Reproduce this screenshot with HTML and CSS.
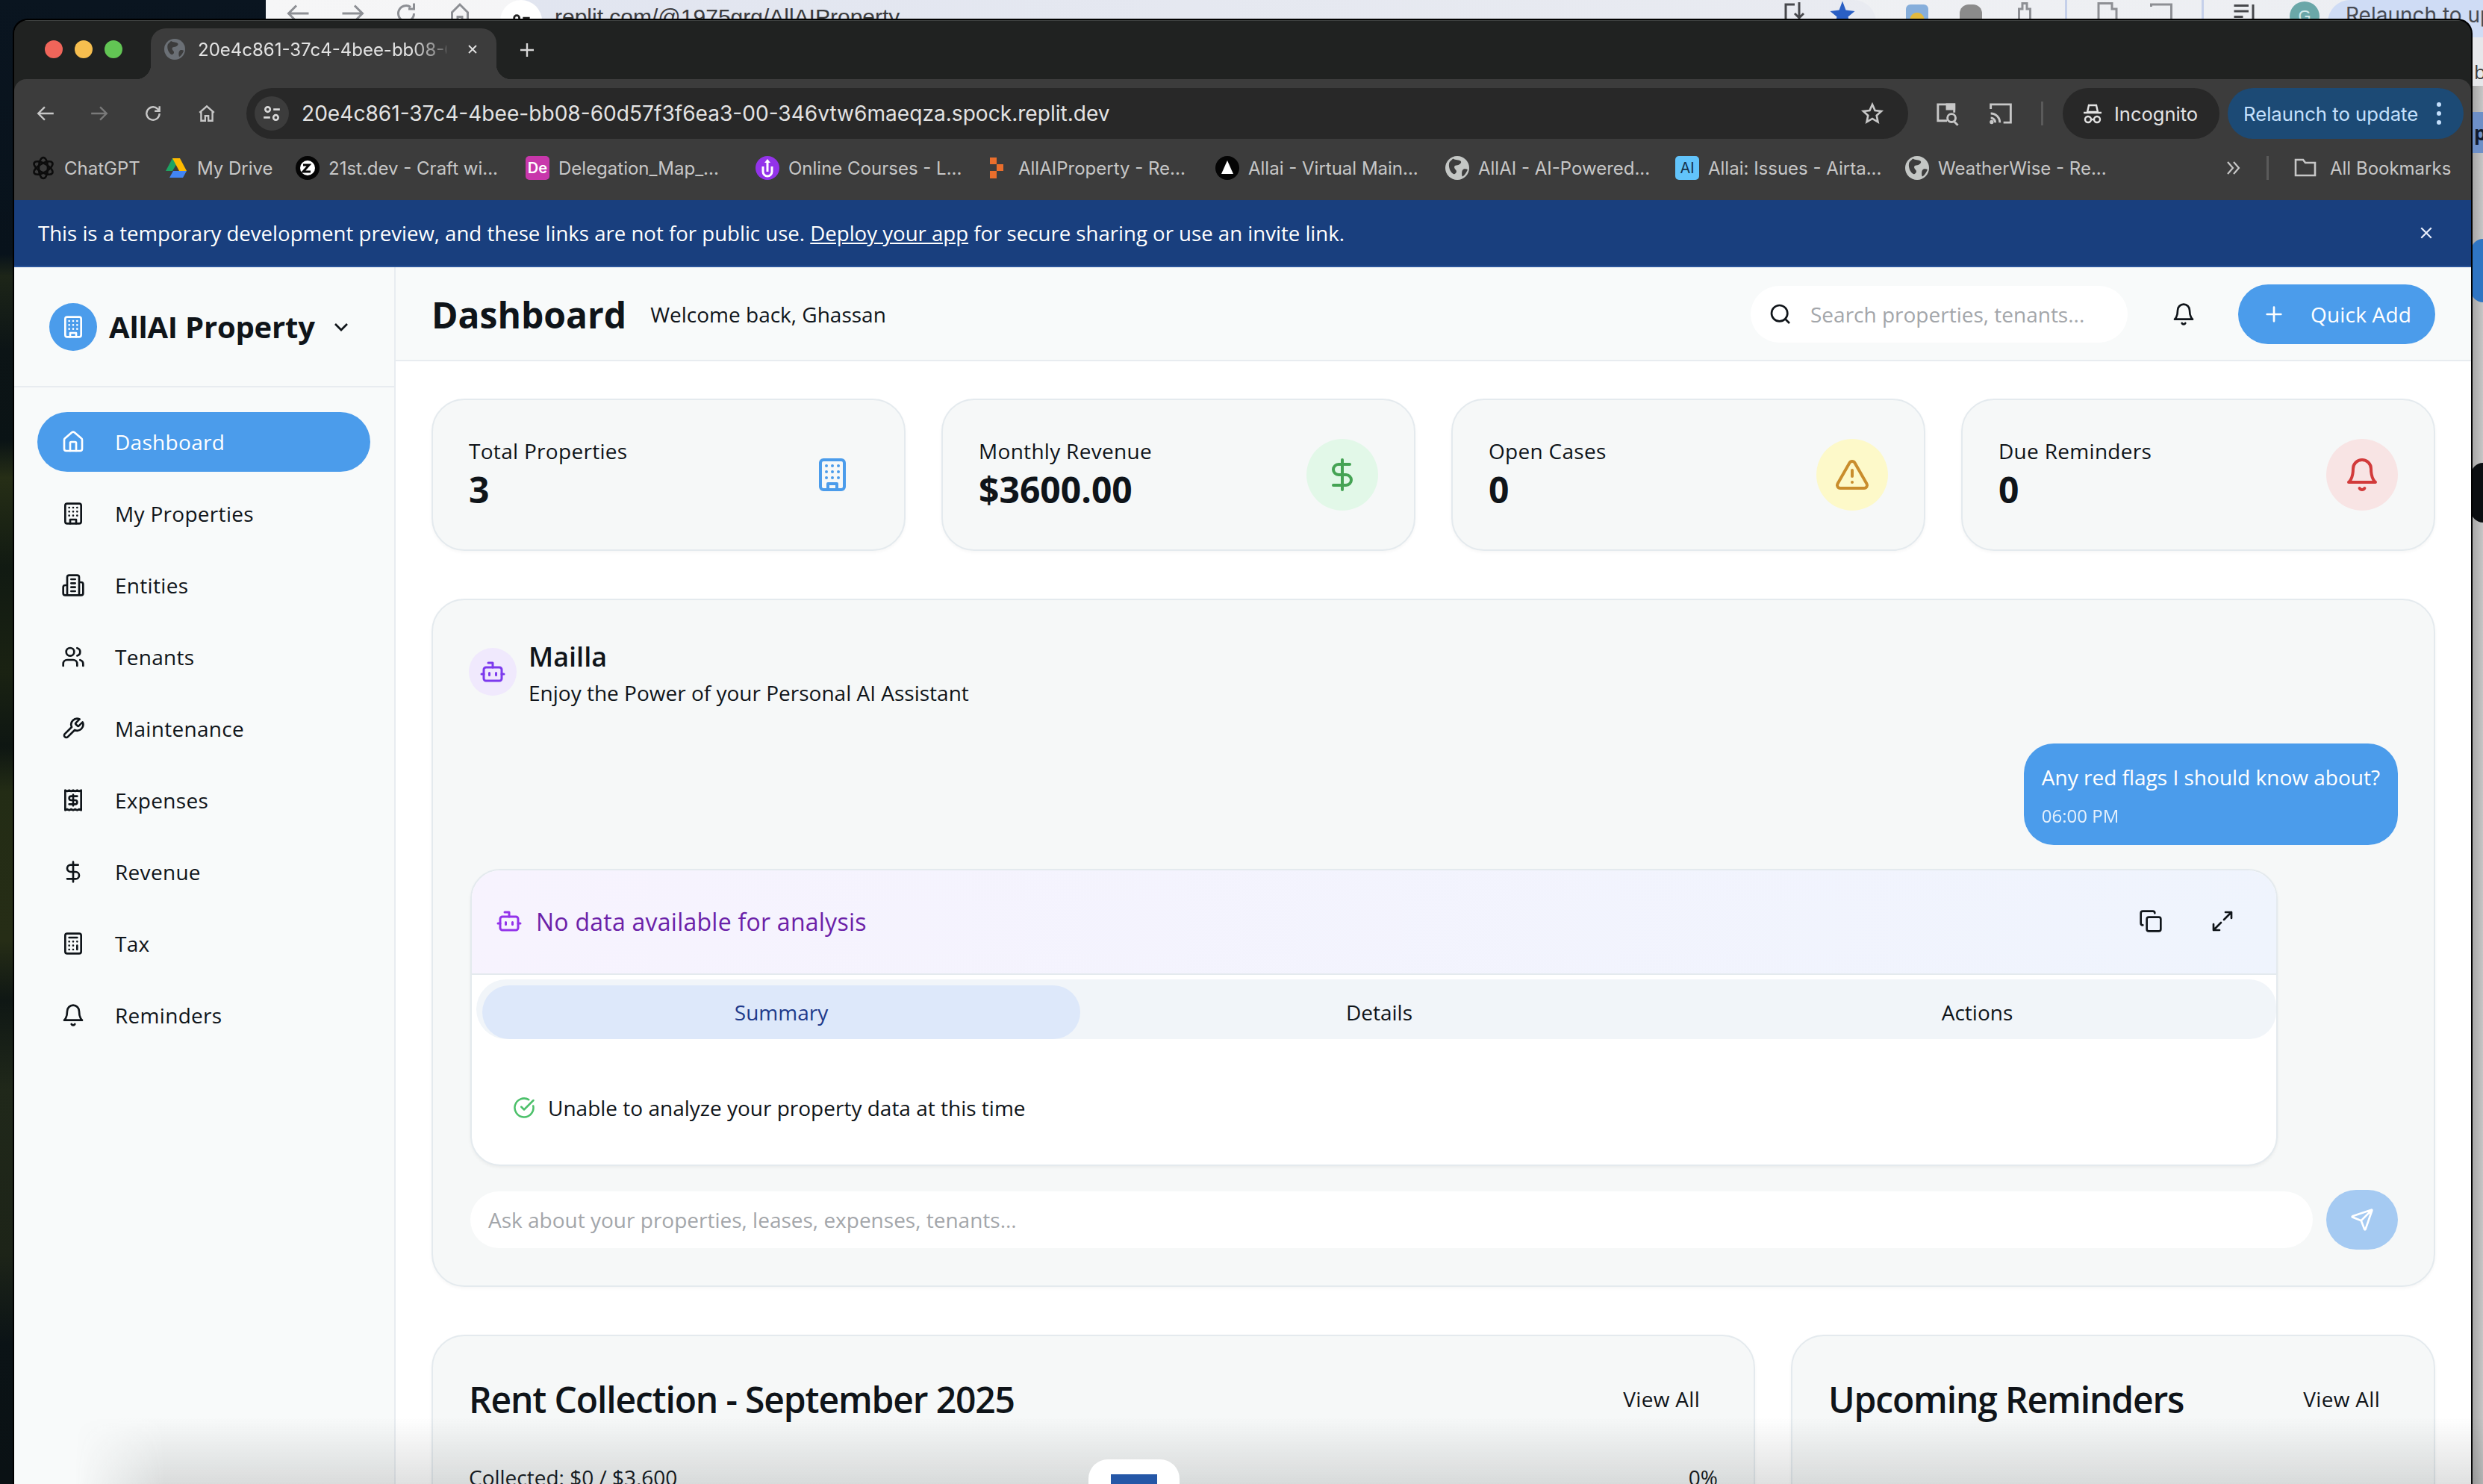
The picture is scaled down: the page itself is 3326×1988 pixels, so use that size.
FILE: index.html
```html
<!DOCTYPE html>
<html lang="en">
<head>
<meta charset="utf-8">
<title>AllAI Property</title>
<link rel="stylesheet" href="styles.css">
</head>
<body>
<svg class="sprite" width="0" height="0" aria-hidden="true">
  <symbol id="i-building" viewBox="0 0 24 24" fill="none" stroke="currentColor" stroke-width="2" stroke-linecap="round" stroke-linejoin="round">
    <rect x="4" y="2" width="16" height="20" rx="2"/><path d="M9 22v-4h6v4M8 6h.01M16 6h.01M12 6h.01M12 10h.01M12 14h.01M16 10h.01M16 14h.01M8 10h.01M8 14h.01"/>
  </symbol>
  <symbol id="i-bell" viewBox="0 0 24 24" fill="none" stroke="currentColor" stroke-width="2" stroke-linecap="round" stroke-linejoin="round">
    <path d="M6 8a6 6 0 0 1 12 0c0 7 3 9 3 9H3s3-2 3-9"/><path d="M10.3 21a1.94 1.94 0 0 0 3.4 0"/>
  </symbol>
  <symbol id="i-bot" viewBox="0 0 24 24" fill="none" stroke="currentColor" stroke-width="2" stroke-linecap="round" stroke-linejoin="round">
    <path d="M12 8V4H8"/><rect x="4" y="8" width="16" height="12" rx="2"/><path d="M2 14h2M20 14h2M15 13v2M9 13v2"/>
  </symbol>
  <symbol id="i-dollar" viewBox="0 0 24 24" fill="none" stroke="currentColor" stroke-width="2" stroke-linecap="round" stroke-linejoin="round">
    <path d="M12 2v20M17 5H9.5a3.5 3.5 0 0 0 0 7h5a3.5 3.5 0 0 1 0 7H6"/>
  </symbol>
  <symbol id="i-globe" viewBox="0 0 28 28">
    <circle cx="14" cy="14" r="14" fill="currentColor"/>
    <path d="M9 3c3 2 7 1 9 3s-2 5-5 5-3 3-1 5 1 4-1 5-5-3-6-6-1-6 0-8zM22 15c2 0 4 0 4 1s-3 7-6 8c-1-3-1-8 2-9z" fill="#3c3c3c"/>
  </symbol>
</svg>

<div class="behind">
  <div class="behind-nav">
    <svg class="b-ic" viewBox="0 0 24 24"><path d="M21 12H3M10 5l-7 7 7 7"/></svg>
    <svg class="b-ic" viewBox="0 0 24 24"><path d="M3 12h18M14 5l7 7-7 7"/></svg>
    <svg class="b-ic" viewBox="0 0 24 24"><path d="M19 12a7 7 0 1 1-3-5.700M19 3v5h-5"/></svg>
    <svg class="b-ic" viewBox="0 0 24 24"><path d="M5 11l7-7 7 7v9h-5v-5h-4v5H5z"/></svg>
  </div>
  <div class="behind-url">
    <span class="behind-chip"><svg viewBox="0 0 24 24"><circle cx="7" cy="7" r="3"/><path d="M14 7h8M2 17h8"/><circle cx="17" cy="17" r="3"/></svg></span>
    <span class="behind-addr">replit.com/@1975grg/AllAIProperty</span>
    <svg class="b-ic b-push b-dark" viewBox="0 0 24 24"><path d="M12 20H4V4h8M16 2v14M12 12l4 4 4-4"/></svg>
    <svg class="b-star" viewBox="0 0 24 24"><path d="M12 1l3 8 8 1-6 5 2 8-7-4-7 4 2-8-6-5 8-1z"/></svg>
  </div>
  <div class="behind-tools">
    <span class="b-ext b-ext-a"></span>
    <span class="b-ext b-ext-b"></span>
    <svg class="b-ic" viewBox="0 0 24 24"><path d="M7 23V8h3V3h4v5h3v15z"/></svg>
    <span class="b-sep"></span>
    <svg class="b-ic" viewBox="0 0 24 24"><path d="M4 23V3h12v5h4v15z"/></svg>
    <svg class="b-ic" viewBox="0 0 24 24"><path d="M3 6V4h18v18h-6"/></svg>
    <span class="b-sep"></span>
    <svg class="b-ic b-dark" viewBox="0 0 24 24"><path d="M3 5h13M3 10h13M3 15h8M20 4v13"/></svg>
    <span class="b-avatar">G</span>
    <span class="b-relaunch">Relaunch to update</span>
  </div>
</div>

<div class="peek">
  <span class="peek-light"><span class="peek-text">bo</span></span>
  <span class="peek-blue"><span class="peek-text peek-bold">pli</span></span>
  <span class="peek-round"></span>
  <span class="peek-dark"></span>
</div>

<div class="window">
  <div class="tabstrip">
    <div class="lights"><i class="light red"></i><i class="light yellow"></i><i class="light green"></i></div>
    <div class="tab">
      <svg class="tab-globe"><use href="#i-globe"/></svg>
      <span class="tab-title">20e4c861-37c4-4bee-bb08-60d57f3f6ea3</span>
      <svg class="tab-x" viewBox="0 0 16 16"><path d="M3 3l10 10M13 3L3 13"/></svg>
    </div>
    <svg class="tab-plus" viewBox="0 0 24 24"><path d="M12 3v18M3 12h18"/></svg>
  </div>

  <div class="toolbar">
    <div class="navs">
      <svg class="nav-ic" viewBox="0 0 24 24"><path d="M22 12H3M11 4l-8 8 8 8"/></svg>
      <svg class="nav-ic nav-dim" viewBox="0 0 24 24"><path d="M2 12h19M13 4l8 8-8 8"/></svg>
      <svg class="nav-ic" viewBox="0 0 24 24"><path d="M20 12a8 8 0 1 1-2.6-5.900L20 8.500M20 3v6h-6"/></svg>
      <svg class="nav-ic" viewBox="0 0 24 24"><path d="M3 11l9-8 9 8M5 9v12h5v-6h4v6h5V9"/></svg>
    </div>
    <div class="omnibox">
      <span class="tune"><svg viewBox="0 0 24 24"><circle cx="7" cy="7" r="3"/><path d="M14 7h8M2 17h8"/><circle cx="17" cy="17" r="3"/></svg></span>
      <span class="url">20e4c861-37c4-4bee-bb08-60d57f3f6ea3-00-346vtw6maeqza.spock.replit.dev</span>
      <svg class="omni-star" viewBox="0 0 24 24"><path d="M12 3l2.700 6 6.300.7-4.700 4.300 1.300 6.500L12 17.200 6.400 20.500 7.700 14 3 9.700 9.300 9z"/></svg>
    </div>
    <div class="tools">
      <svg class="tool-ic" viewBox="0 0 28 28"><path d="M14 22H4V4h18v9"/><path d="M14 4h8v5h-8z" fill="#c7c7c7"/><circle cx="19" cy="19" r="4.500"/><path d="M22 23l4 4"/></svg>
      <svg class="tool-ic" viewBox="0 0 28 28"><path d="M3 9V4h22v20h-8M3 14a10 10 0 0 1 10 10M3 19a5 5 0 0 1 5 5"/><circle cx="4" cy="23.500" r="1" fill="#c7c7c7"/></svg>
      <span class="tool-sep"></span>
      <span class="incognito">
        <svg viewBox="0 0 28 28"><path d="M9 3h10l2 9H7zM2 13h24"/><circle cx="8" cy="22" r="4"/><circle cx="20" cy="22" r="4"/><path d="M12 22h4"/></svg>
        <span>Incognito</span>
      </span>
      <span class="relaunch"><span>Relaunch to update</span><span class="dots"><i></i><i></i><i></i></span></span>
    </div>
  </div>

  <div class="bookmarks">
    <div class="bm-list">
      <a class="bm bm-chat"><svg class="fav" viewBox="0 0 32 32"><g fill="none" stroke="#0c0c0c" stroke-width="2.600"><ellipse cx="16" cy="16" rx="6" ry="14"/><ellipse cx="16" cy="16" rx="6" ry="14" transform="rotate(60 16 16)"/><ellipse cx="16" cy="16" rx="6" ry="14" transform="rotate(120 16 16)"/></g></svg><span>ChatGPT</span></a>
      <a class="bm bm-drive"><svg class="fav" viewBox="0 0 32 32"><path d="M11 3h10L11 20H2z" fill="#1ea362"/><path d="M21 3l9 17H20L11 3z" fill="#ffba00"/><path d="M7 29l5-9h18l-5 9z" fill="#4285f4"/></svg><span>My Drive</span></a>
      <a class="bm"><svg class="fav" viewBox="0 0 32 32"><circle cx="16" cy="16" r="16" fill="#050505"/><circle cx="16" cy="16" r="10" fill="#fff"/><path d="M10 12h8l-8 9h10" fill="none" stroke="#050505" stroke-width="3"/></svg><span>21st.dev - Craft wi...</span></a>
      <a class="bm"><span class="fav fav-de">De</span><span>Delegation_Map_...</span></a>
      <a class="bm"><svg class="fav" viewBox="0 0 32 32"><circle cx="16" cy="16" r="16" fill="#9333ea"/><path d="M10 14v7a6 6 0 0 0 12 0v-7" fill="none" stroke="#fff" stroke-width="3"/><path d="M16 4l4 5h-8z" fill="#fff"/><path d="M16 9v12" stroke="#fff" stroke-width="3"/></svg><span>Online Courses - L...</span></a>
      <a class="bm"><svg class="fav" viewBox="0 0 32 32"><path d="M6 2h9v9H6zM15 11h9v9h-9zM6 20h9v10H6z" fill="#ea6e2c"/></svg><span>AllAIProperty - Re...</span></a>
      <a class="bm"><svg class="fav" viewBox="0 0 32 32"><circle cx="16" cy="16" r="16" fill="#050505"/><path d="M16 6l8 18H8z" fill="#fff"/></svg><span>Allai - Virtual Main...</span></a>
      <a class="bm"><svg class="fav fav-globe"><use href="#i-globe"/></svg><span>AllAI - AI-Powered...</span></a>
      <a class="bm"><span class="fav fav-ai">AI</span><span>Allai: Issues - Airta...</span></a>
      <a class="bm"><svg class="fav fav-globe"><use href="#i-globe"/></svg><span>WeatherWise - Re...</span></a>
    </div>
    <svg class="bm-more" viewBox="0 0 24 24"><path d="M5 4l7 8-7 8M13 4l7 8-7 8"/></svg>
    <span class="bm-sep"></span>
    <svg class="bm-folder" viewBox="0 0 32 32"><path d="M3 26V5h10l3 4h13v17z"/></svg>
    <span class="bm-all">All Bookmarks</span>
  </div>

  <div class="banner">
    <p>This is a temporary development preview, and these links are not for public use. <a>Deploy your app</a> for secure sharing or use an invite link.</p>
    <svg class="banner-x" viewBox="0 0 16 16"><path d="M2 2l12 12M14 2L2 14"/></svg>
  </div>

  <div class="app">
    <aside class="sidebar">
      <div class="brand">
        <span class="brand-logo"><svg><use href="#i-building"/></svg></span>
        <span class="brand-name">AllAI Property</span>
        <svg class="brand-chev" viewBox="0 0 24 24"><path d="M6 9l6 6 6-6"/></svg>
      </div>
      <nav class="nav">
        <a class="nav-item active"><svg class="ico" viewBox="0 0 24 24"><path d="M15 21v-8a1 1 0 0 0-1-1h-4a1 1 0 0 0-1 1v8"/><path d="M3 10a2 2 0 0 1 .7-1.500l7-6a2 2 0 0 1 2.600 0l7 6a2 2 0 0 1 .7 1.500v9a2 2 0 0 1-2 2H5a2 2 0 0 1-2-2z"/></svg><span>Dashboard</span></a>
        <a class="nav-item"><svg class="ico"><use href="#i-building"/></svg><span>My Properties</span></a>
        <a class="nav-item"><svg class="ico" viewBox="0 0 24 24"><path d="M6 22V4a2 2 0 0 1 2-2h8a2 2 0 0 1 2 2v18zM6 12H4a2 2 0 0 0-2 2v6a2 2 0 0 0 2 2h2M18 9h2a2 2 0 0 1 2 2v9a2 2 0 0 1-2 2h-2M10 6h4M10 10h4M10 14h4M10 18h4"/></svg><span>Entities</span></a>
        <a class="nav-item"><svg class="ico" viewBox="0 0 24 24"><path d="M16 21v-2a4 4 0 0 0-4-4H6a4 4 0 0 0-4 4v2"/><circle cx="9" cy="7" r="4"/><path d="M22 21v-2a4 4 0 0 0-3-3.870M16 3.130a4 4 0 0 1 0 7.750"/></svg><span>Tenants</span></a>
        <a class="nav-item"><svg class="ico" viewBox="0 0 24 24"><path d="M14.700 6.300a1 1 0 0 0 0 1.400l1.600 1.600a1 1 0 0 0 1.400 0l3.770-3.770a6 6 0 0 1-7.940 7.940l-6.910 6.910a2.120 2.120 0 0 1-3-3l6.910-6.910a6 6 0 0 1 7.940-7.940z"/></svg><span>Maintenance</span></a>
        <a class="nav-item"><svg class="ico" viewBox="0 0 24 24"><path d="M4 2v20l2-1 2 1 2-1 2 1 2-1 2 1 2-1 2 1V2l-2 1-2-1-2 1-2-1-2 1-2-1-2 1z"/><path d="M16 8h-6a2 2 0 1 0 0 4h4a2 2 0 1 1 0 4H8M12 17.500v-11"/></svg><span>Expenses</span></a>
        <a class="nav-item"><svg class="ico"><use href="#i-dollar"/></svg><span>Revenue</span></a>
        <a class="nav-item"><svg class="ico" viewBox="0 0 24 24"><rect x="4" y="2" width="16" height="20" rx="2"/><path d="M8 6h8M16 14v4M16 10h.01M12 10h.01M8 10h.01M12 14h.01M8 14h.01M12 18h.01M8 18h.01"/></svg><span>Tax</span></a>
        <a class="nav-item"><svg class="ico"><use href="#i-bell"/></svg><span>Reminders</span></a>
      </nav>
    </aside>

    <main class="main">
      <header class="topbar">
        <h1 class="page-title">Dashboard</h1>
        <span class="welcome">Welcome back, Ghassan</span>
        <div class="search">
          <svg class="search-ic" viewBox="0 0 24 24"><circle cx="11" cy="11" r="8"/><path d="M21 21l-4.300-4.300"/></svg>
          <span>Search properties, tenants...</span>
        </div>
        <svg class="top-bell"><use href="#i-bell"/></svg>
        <button class="quick"><svg viewBox="0 0 24 24"><path d="M5 12h14M12 5v14"/></svg><span>Quick Add</span></button>
      </header>

      <div class="content">
        <section class="stats">
          <article class="stat"><div><p class="stat-label">Total Properties</p><p class="stat-value">3</p></div><span class="stat-ic c-blue"><svg><use href="#i-building"/></svg></span></article>
          <article class="stat"><div><p class="stat-label">Monthly Revenue</p><p class="stat-value">$3600.00</p></div><span class="stat-ic c-green"><svg><use href="#i-dollar"/></svg></span></article>
          <article class="stat"><div><p class="stat-label">Open Cases</p><p class="stat-value">0</p></div><span class="stat-ic c-yellow"><svg viewBox="0 0 24 24" fill="none" stroke="currentColor" stroke-width="2" stroke-linecap="round" stroke-linejoin="round"><path d="M21.730 18l-8-14a2 2 0 0 0-3.480 0l-8 14A2 2 0 0 0 4 21h16a2 2 0 0 0 1.730-3"/><path d="M12 9v4M12 17h.01"/></svg></span></article>
          <article class="stat"><div><p class="stat-label">Due Reminders</p><p class="stat-value">0</p></div><span class="stat-ic c-red"><svg><use href="#i-bell"/></svg></span></article>
        </section>

        <section class="card assistant">
          <div class="as-head">
            <span class="as-avatar"><svg><use href="#i-bot"/></svg></span>
            <div>
              <h2 class="as-name">Mailla</h2>
              <p class="as-sub">Enjoy the Power of your Personal AI Assistant</p>
            </div>
          </div>
          <div class="bubble-row">
            <div class="bubble">
              <p>Any red flags I should know about?</p>
              <time>06:00 PM</time>
            </div>
          </div>
          <div class="reply">
            <div class="reply-head">
              <svg class="reply-bot"><use href="#i-bot"/></svg>
              <span class="reply-title">No data available for analysis</span>
              <svg class="reply-act act-copy" viewBox="0 0 24 24"><rect x="8" y="8" width="14" height="14" rx="2"/><path d="M4 16c-1.100 0-2-.9-2-2V4c0-1.100.9-2 2-2h10c1.100 0 2 .9 2 2"/></svg>
              <svg class="reply-act act-exp" viewBox="0 0 24 24"><path d="M21 3l-7.500 7.500M3 21l7.500-7.500M15 3h6v6M9 21H3v-6"/></svg>
            </div>
            <div class="tabs">
              <span class="tab-btn on">Summary</span>
              <span class="tab-btn">Details</span>
              <span class="tab-btn">Actions</span>
            </div>
            <div class="reply-body">
              <svg class="check" viewBox="0 0 24 24"><path d="M21.800 10A10 10 0 1 1 17 3.300"/><path d="M9 11l3 3L22 4"/></svg>
              <span>Unable to analyze your property data at this time</span>
            </div>
          </div>
          <div class="ask">
            <div class="ask-input">Ask about your properties, leases, expenses, tenants...</div>
            <button class="send"><svg viewBox="0 0 24 24"><path d="M14.500 21.700a.5.5 0 0 0 .9 0L22 2.600a.5.5 0 0 0-.6-.6L2.300 8.500a.5.5 0 0 0 0 .9l8 3.200a2 2 0 0 1 1.100 1.100zM21.900 2.100L10.900 13"/></svg></button>
          </div>
        </section>

        <section class="lower">
          <article class="card panel">
            <div class="panel-head"><h3>Rent Collection - September 2025</h3><a class="view-all">View All</a></div>
            <div class="rent-row"><span>Collected: $0 / $3,600</span><span>0%</span></div>
          </article>
          <article class="card panel">
            <div class="panel-head"><h3>Upcoming Reminders</h3><a class="view-all">View All</a></div>
          </article>
        </section>
      </div>
    </main>
  </div>
</div>

<div class="dock-shade"></div>
<div class="dock-tile"><span class="dock-mark"></span></div>
</body>
</html>
```
FILE: styles.css
```css
* { box-sizing: border-box; margin: 0; padding: 0; }
html, body { width: 3326px; height: 1988px; overflow: hidden; }
body {
  position: relative;
  background: linear-gradient(180deg, #0a1520 0, #08121b 340px, #1d2518 370px, #0c1416 470px, #0a1315 590px, #262e16 640px, #111a12 760px, #1a2212 900px, #0e1612 1000px, #232c15 1060px, #262d16 1260px, #0f1714 1340px, #20281a 1460px, #1d2418 1680px, #0b1316 1800px, #0a1114 100%);
  font-family: "Open Sans", "Noto Sans", sans-serif;
  color: #0f1419;
}
.sprite { position: absolute; }

/* window behind */
.behind {
  position: absolute; left: 356px; top: 0; right: 0; height: 50px;
  background: linear-gradient(90deg, #f6f6f7, #eceef2);
  display: flex; align-items: flex-start; overflow: hidden;
}
.behind-nav { display: flex; gap: 36px; padding-left: 26px; width: 314px; flex: none; }
.b-ic { width: 36px; height: 36px; fill: none; stroke: #8d8f94; stroke-width: 2; flex: none; }
.b-dark { stroke: #47484c; }
.behind-url { width: 1843px; height: 60px; flex: none; display: flex; align-items: flex-start; background: linear-gradient(90deg, #e1e5f0, #e9ebf1); border-radius: 30px; padding-right: 27px; }
.behind-chip { width: 56px; height: 60px; background: #fff; border-radius: 30px; display: flex; align-items: center; justify-content: center; flex: none; }
.behind-chip svg { width: 28px; height: 28px; fill: none; stroke: #222; stroke-width: 2.400; }
.behind-addr { margin: 3px 0 0 17px; font: 400 30px/40px "Liberation Sans", sans-serif; color: #3a3a3c; white-space: nowrap; }
.b-push { margin-left: auto; }
.b-star { width: 36px; height: 36px; margin-left: 28px; fill: #2a5fc4; flex: none; }
.behind-tools { flex: 1; display: flex; align-items: flex-start; gap: 36px; padding-left: 37px; white-space: nowrap; }
.b-ext { width: 30px; height: 34px; flex: none; border-radius: 6px 6px 0 0; margin: 6px 3px 0; }
.b-ext-a { background: radial-gradient(circle at 50% 60%, #e2b93e 0 9px, #86aedb 10px); }
.b-ext-b { background: #8b8b8b; border-radius: 12px 12px 0 0; }
.b-sep { width: 3px; height: 40px; background: #c5d0ea; flex: none; }
.b-avatar { width: 40px; height: 40px; flex: none; border-radius: 50%; margin: 2px 0 0 7px; background: #6aa7a8; color: #d4ecec; font: 400 22px/40px "Liberation Sans", sans-serif; text-align: center; }
.b-relaunch { flex: none; margin-left: -25px; height: 60px; width: 300px; padding-left: 24px; background: #cfdcf5; border-radius: 30px 0 0 30px; font: 400 28px/40px Inter, sans-serif; color: #474a52; }

/* right sliver: the next window, dimmed by the front window's shadow */
.peek { position: absolute; left: 3310px; top: 50px; right: 0; bottom: 0; overflow: hidden; background: linear-gradient(90deg, #a2a2a2, #c6c6c6); display: flex; flex-direction: column; }
.peek-light { height: 65px; flex: none; background: #e6e7ea; position: relative; overflow: hidden; }
.peek-blue { height: 55px; margin-top: 35px; flex: none; background: #6d8fc7; position: relative; overflow: hidden; }
.peek-text { position: absolute; left: 4px; bottom: 4px; font: 400 26px/30px "Open Sans", sans-serif; color: #3a3a3a; }
.peek-bold { font-weight: 700; color: #101a2c; bottom: 12px; }
.peek-round { height: 85px; margin-top: 115px; flex: none; background: #2f75c3; border-radius: 24px 0 0 24px; }
.peek-dark { height: 80px; margin-top: 215px; flex: none; background: #0b0e11; border-radius: 16px 0 0 16px; }

/* chrome window */
.window {
  position: absolute; left: 19px; top: 25px; width: 3291px; height: 1963px;
  border-radius: 20px 20px 0 0; overflow: hidden;
  display: flex; flex-direction: column;
  background: #202221; border-top: 2px solid #000;
  box-shadow: -2px 0 0 #000, 2px 0 0 #000;
}
.tabstrip { height: 79px; flex: none; background: #202221; display: flex; align-items: flex-end; padding-left: 41px; border-top: 1px solid #3f4241; }
.lights { display: flex; gap: 16px; align-self: flex-start; padding-top: 26px; width: 142px; flex: none; }
.light { width: 24px; height: 24px; border-radius: 50%; }
.red { background: #f0655a; } .yellow { background: #f6be4f; } .green { background: #62c554; }
.tab {
  width: 463px; height: 68px; background: #3c3c3c; border-radius: 20px 20px 0 0;
  display: flex; align-items: center; padding: 0 22px 12px 18px; position: relative;
}
.tab::before, .tab::after { content: ""; position: absolute; bottom: 0; width: 20px; height: 20px; }
.tab::before { left: -20px; background: radial-gradient(circle at 0 0, transparent 20px, #3c3c3c 20.500px); }
.tab::after { right: -20px; background: radial-gradient(circle at 100% 0, transparent 20px, #3c3c3c 20.500px); }
.tab-globe { width: 28px; height: 28px; color: #6b7076; flex: none; }
.tab-title { margin-left: 17px; width: 333px; overflow: hidden; white-space: nowrap; font: 400 24px Inter, sans-serif; color: #e3e3e3; flex: none;
  -webkit-mask-image: linear-gradient(90deg,#000 86%,rgba(0,0,0,.25) 100%); mask-image: linear-gradient(90deg,#000 86%,rgba(0,0,0,.25) 100%); }
.tab-x { width: 16px; height: 16px; margin-left: 27px; fill: none; stroke: #e3e3e3; stroke-width: 1.800; flex: none; }
.tab-plus { width: 24px; height: 24px; margin: 0 0 27px 29px; fill: none; stroke: #d7d7d7; stroke-width: 2.400; }

.toolbar { height: 80px; flex: none; background: #3c3c3c; border-radius: 16px 16px 0 0; display: flex; align-items: center; padding: 12px 13px 0 0; }
.navs { width: 311px; flex: none; padding-left: 29px; display: flex; gap: 46px; }
.nav-ic { width: 26px; height: 30px; fill: none; stroke: #c7c7c7; stroke-width: 2.200; flex: none; }
.nav-dim { stroke: #7a7a7a; }
.omnibox { width: 2226px; height: 68px; flex: none; background: #282828; border-radius: 34px; display: flex; align-items: center; padding: 0 32px 0 11px; }
.tune { width: 46px; height: 46px; border-radius: 23px; background: #3c3c3c; display: flex; align-items: center; justify-content: center; flex: none; }
.tune svg { width: 26px; height: 26px; fill: none; stroke: #d8d8d8; stroke-width: 2.400; }
.url { margin-left: 17px; flex: 1; font: 400 28.100px Inter, sans-serif; color: #e3e3e3; white-space: nowrap; }
.omni-star { width: 32px; height: 32px; fill: none; stroke: #c7c7c7; stroke-width: 2; flex: none; }
.tools { display: flex; align-items: center; flex: 1; padding-left: 35px; }
.tool-ic { width: 34px; height: 34px; fill: none; stroke: #c7c7c7; stroke-width: 2.400; flex: none; }
.tool-ic + .tool-ic { margin-left: 38px; }
.tool-sep { width: 3px; height: 32px; background: #5a5a5a; margin: 0 26px 0 37px; flex: none; }
.incognito { width: 210px; height: 68px; flex: none; border-radius: 34px; background: #282828; display: flex; align-items: center; padding-left: 26px; gap: 15px; font: 400 25.500px Inter, sans-serif; color: #e3e3e3; }
.incognito svg { width: 28px; height: 32px; fill: none; stroke: #e3e3e3; stroke-width: 2.400; flex: none; }
.relaunch { width: 316px; height: 68px; flex: none; margin-left: 11px; border-radius: 34px; background: #1c4a75; color: #c4e0fd; display: flex; align-items: center; justify-content: space-between; padding: 0 30px 0 21px; font: 400 25.700px Inter, sans-serif; white-space: nowrap; }
.dots { display: flex; flex-direction: column; gap: 6px; }
.dots i { width: 6px; height: 6px; border-radius: 50%; background: #c4e0fd; }

.bookmarks { height: 82px; flex: none; background: #3c3c3c; display: flex; align-items: center; padding: 0 30px 4px 23px; font: 400 24px Inter, sans-serif; color: #c7c7c7; }
.bm-list { display: flex; width: 2919px; flex: none; }
.bm { width: 308px; flex: none; display: flex; align-items: center; gap: 12px; white-space: nowrap; }
.bm-chat { width: 178px; }
.bm-drive { width: 176px; }
.fav { width: 32px; height: 32px; flex: none; }
.fav-globe { color: #c4c7c5; }
.fav-de { background: #c837ab; color: #fff; border-radius: 5px; font-weight: 600; font-size: 20px; display: flex; align-items: center; justify-content: center; }
.fav-ai { background: #62c4fb; color: #16324a; border-radius: 5px; font-size: 20px; display: flex; align-items: center; justify-content: center; }
.bm-more { width: 24px; height: 24px; fill: none; stroke: #c7c7c7; stroke-width: 2.200; flex: none; margin-left: 18px; }
.bm-sep { width: 3px; height: 32px; background: #5a5a5a; margin: 0 0 0 33px; flex: none; }
.bm-folder { width: 32px; height: 32px; fill: none; stroke: #c7c7c7; stroke-width: 2.600; margin-left: 33px; flex: none; }
.bm-all { margin-left: 17px; white-space: nowrap; }

.banner { height: 90px; flex: none; background: #193f7e; border-bottom: 2px solid #2a5499; display: flex; align-items: center; justify-content: space-between; padding: 0 51px 0 32px; color: #fff; font: 400 27.600px "Open Sans", sans-serif; }
.banner a { text-decoration: underline; font-weight: 500; }
.banner-x { width: 18px; height: 18px; fill: none; stroke: #e8eefb; stroke-width: 2; flex: none; }

.app { flex: 1; display: flex; min-height: 0; background: #fff; }
.sidebar { width: 511px; flex: none; background: #f8fafa; border-right: 2px solid #e8ecf0; }
.brand { height: 161px; border-bottom: 2px solid #e8ecf0; display: flex; align-items: center; padding-left: 47px; }
.brand-logo { width: 64px; height: 64px; border-radius: 50%; background: #4b9ceb; display: flex; align-items: center; justify-content: center; color: #fff; flex: none; }
.brand-logo svg { width: 32px; height: 32px; }
.brand-name { margin-left: 16px; font-size: 40px; font-weight: 700; letter-spacing: -.2px; color: #0f1419; white-space: nowrap; }
.brand-chev { width: 32px; height: 32px; fill: none; stroke: #0f1419; stroke-width: 2; margin-left: 19px; flex: none; }
.nav { padding: 33px 32px 0 31px; display: flex; flex-direction: column; gap: 16px; }
.nav-item { height: 80px; border-radius: 40px; display: flex; align-items: center; padding-left: 32px; gap: 40px; font-size: 28px; font-weight: 500; letter-spacing: .3px; color: #0f1419; }
.ico { width: 32px; height: 32px; flex: none; fill: none; stroke: currentColor; stroke-width: 2; stroke-linecap: round; stroke-linejoin: round; }
.nav-item.active { background: #4b9ceb; color: #fff; }

.main { flex: 1; min-width: 0; display: flex; flex-direction: column; }
.topbar { height: 126px; flex: none; background: #f8fafa; border-bottom: 2px solid #e8ecf0; display: flex; align-items: center; padding: 2px 48px 0; }
.page-title { font-size: 48px; font-weight: 700; color: #0f1419; }
.welcome { margin-left: 32px; font-size: 28px; color: #0f1419; }
.search { margin-left: auto; width: 505px; height: 76px; background: #fff; border-radius: 38px; display: flex; align-items: center; padding-left: 24px; gap: 24px; color: #a3a6aa; font-size: 28px; white-space: nowrap; }
.search-ic { width: 32px; height: 32px; fill: none; stroke: #0f1419; stroke-width: 2; flex: none; }
.top-bell { width: 32px; height: 32px; margin-left: 59px; color: #0f1419; flex: none; }
.quick { width: 264px; height: 80px; margin-left: 57px; border: 0; border-radius: 40px; background: #4b9ceb; color: #fff; font: 500 28px "Open Sans", sans-serif; letter-spacing: .2px; display: flex; align-items: center; padding-left: 32px; gap: 33px; flex: none; }
.quick svg { width: 32px; height: 32px; fill: none; stroke: #fff; stroke-width: 2; stroke-linecap: round; }

.content { padding: 50px 48px 48px; display: flex; flex-direction: column; gap: 64px; }
.stats { display: grid; grid-template-columns: repeat(4, 1fr); gap: 48px; }
.stat, .card { background: #f6f8f8; border: 2px solid #e4eaee; border-radius: 44px; box-shadow: 0 2px 4px rgba(0,0,0,.04); }
.stat { height: 204px; padding: 48px; display: flex; align-items: center; justify-content: space-between; }
.stat-label { font-size: 28px; line-height: 40px; font-weight: 500; letter-spacing: .3px; color: #0f1419; }
.stat-value { font-size: 48px; line-height: 64px; font-weight: 700; color: #0f1419; }
.stat-ic { width: 96px; height: 96px; border-radius: 50%; display: flex; align-items: center; justify-content: center; flex: none; }
.stat-ic svg { width: 48px; height: 48px; }
.c-blue { color: #4b9ceb; }
.c-green { background: #e2f8e8; color: #45a354; }
.c-yellow { background: #fdf9c9; color: #c98d2c; }
.c-red { background: #f8e4e4; color: #d23b3b; }

.assistant { height: 922px; padding: 48px; display: flex; flex-direction: column; }
.as-head { display: flex; align-items: center; gap: 16px; height: 100px; margin-top: 2px; }
.as-avatar { width: 64px; height: 64px; border-radius: 50%; background: #f0e9fd; color: #7c3aed; display: flex; align-items: center; justify-content: center; margin-top: -8px; flex: none; }
.as-avatar svg { width: 36px; height: 36px; }
.as-name { font-size: 36px; line-height: 48px; font-weight: 600; color: #0f1419; }
.as-sub { font-size: 28px; line-height: 48px; color: #0f1419; }
.bubble-row { display: flex; justify-content: flex-end; margin-top: 42px; }
.bubble { background: #4b9ceb; color: #fff; border-radius: 40px; padding: 24px; height: 136px; }
.bubble p { font-size: 28px; line-height: 42px; }
.bubble time { display: block; font-size: 24px; line-height: 36px; opacity: .85; margin-top: 13px; }
.reply { margin: 32px 0 0 2px; width: 2421px; height: 398px; background: #fff; border: 2px solid #e4eaee; border-radius: 40px; box-shadow: 0 2px 4px rgba(0,0,0,.05); overflow: hidden; }
.reply-head { height: 140px; background: linear-gradient(100deg, #f7f3fe, #eff4fd); border-bottom: 2px solid #e4eaee; display: flex; align-items: center; padding: 0 0 2px 32px; }
.reply-bot { width: 36px; height: 36px; color: #9333ea; flex: none; }
.reply-title { margin-left: 18px; font-size: 32px; font-weight: 500; letter-spacing: .25px; color: #6b21a8; }
.reply-act { width: 32px; height: 32px; fill: none; stroke: #0f1419; stroke-width: 2; stroke-linecap: round; stroke-linejoin: round; flex: none; }
.act-copy { margin-left: auto; }
.act-exp { margin: 0 56px 0 64px; }
.tabs { margin: 6px 0 0 6px; height: 80px; background: #f1f5f9; border-radius: 40px 36px 36px 40px; display: flex; padding: 8px 0 0 8px; }
.tab-btn { width: 801px; height: 72px; flex: none; border-radius: 36px; display: flex; align-items: center; justify-content: center; font-size: 28px; font-weight: 500; color: #0f1419; }
.tab-btn.on { background: #dde8fa; color: #1e3a8a; }
.reply-body { display: flex; align-items: center; gap: 17px; padding: 73px 0 0 55px; font-size: 28px; color: #0f1419; }
.check { width: 30px; height: 36px; fill: none; stroke: #4cc06a; stroke-width: 2; stroke-linecap: round; stroke-linejoin: round; flex: none; }
.ask { margin: 32px 0 0 2px; display: flex; align-items: center; gap: 18px; }
.ask-input { width: 2468px; height: 76px; background: #fff; border-radius: 38px; display: flex; align-items: center; padding-left: 24px; font-size: 28px; color: #a3a6aa; }
.send { width: 96px; height: 80px; border: 0; border-radius: 40px; background: #a5caf2; display: flex; align-items: center; justify-content: center; flex: none; }
.send svg { width: 32px; height: 32px; fill: none; stroke: #fff; stroke-width: 2; stroke-linejoin: round; stroke-linecap: round; }

.lower { display: grid; grid-template-columns: 1773fr 863fr; gap: 48px; }
.panel { padding: 48px; height: 500px; }
.panel-head { display: flex; align-items: center; justify-content: space-between; height: 72px; }
.panel-head h3 { font-size: 48px; font-weight: 600; color: #0f1419; white-space: nowrap; letter-spacing: -1.150px; }
.view-all { padding: 0 24px; font-size: 28px; font-weight: 500; letter-spacing: .3px; color: #0f1419; }
.rent-row { display: flex; justify-content: space-between; margin-top: 50px; font-size: 28px; color: #0f1419; }

/* overlays at the bottom of the desktop */
.dock-shade { position: absolute; left: 100px; right: 0; bottom: 0; height: 90px; background: linear-gradient(180deg, rgba(60,66,66,0), rgba(60,66,66,.16)); pointer-events: none; -webkit-mask-image: linear-gradient(90deg, transparent 0, #000 120px); mask-image: linear-gradient(90deg, transparent 0, #000 120px); }
.dock-tile { position: absolute; left: 1458px; bottom: 0; width: 122px; height: 33px; background: #fff; border-radius: 26px 26px 0 0; display: flex; justify-content: center; align-items: flex-start; padding-top: 20px; }
.dock-mark { width: 62px; height: 13px; background: #2557a7; }
```
